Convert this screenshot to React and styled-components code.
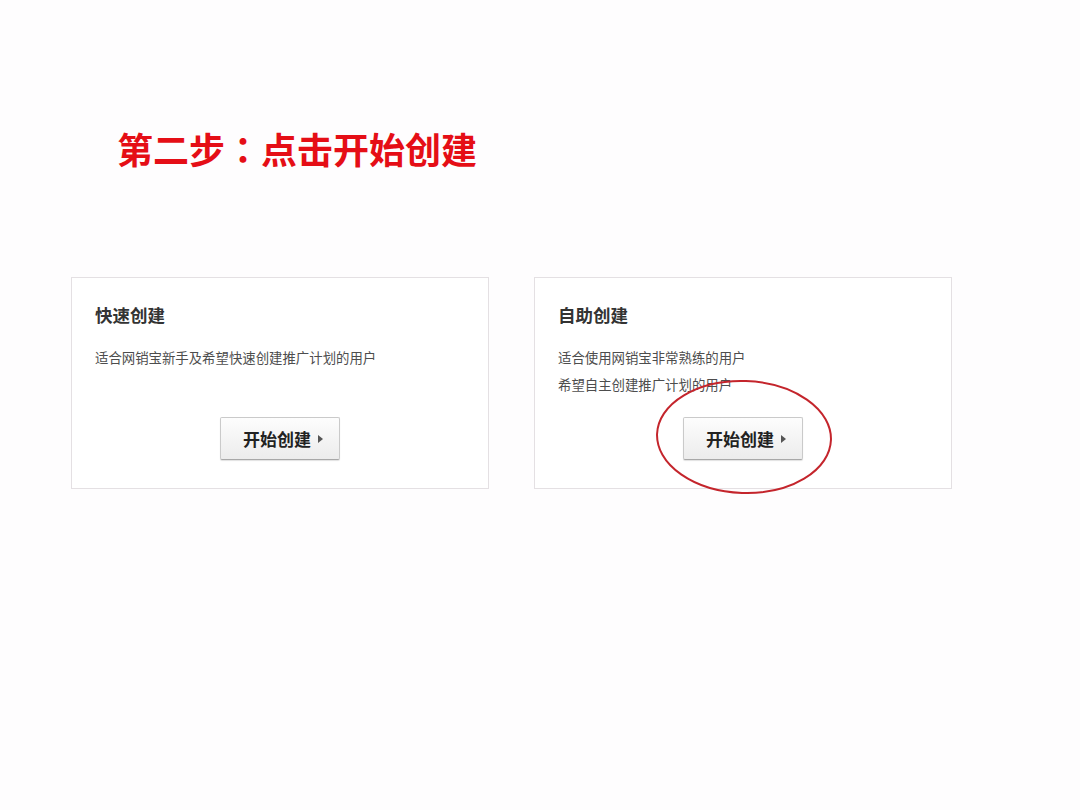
import React from "react";
import styled, { createGlobalStyle } from "styled-components";

const GlobalStyle = createGlobalStyle`
  html, body { margin: 0; padding: 0; background: #ffffff; }
  body { font-family: "Noto Sans CJK SC", "Noto Sans", sans-serif; }
`;

const Page = styled.div`
  width: 1080px;
  height: 810px;
  background: #fefdfe;
  box-sizing: border-box;
  padding-top: 126px;
  overflow: hidden;
`;

const Heading = styled.h1`
  margin: 0 0 107px 117px;
  font-size: 36px;
  line-height: 44px;
  font-weight: 700;
  color: #e50e16;
  letter-spacing: 0;
`;

const Colon = styled.span`
  font-family: "Noto Sans CJK TC", "Noto Sans CJK SC", sans-serif;
`;

const CardRow = styled.div`
  display: flex;
  gap: 45px;
  padding-left: 71px;
`;

const Card = styled.div`
  position: relative;
  width: 418px;
  height: 212px;
  box-sizing: border-box;
  border: 1px solid #e4e0e3;
  background: #ffffff;
  display: flex;
  flex-direction: column;
  padding: 25px 20px 28px 23px;
`;

const CardTitle = styled.div`
  font-size: 17.5px;
  line-height: 24px;
  font-weight: 700;
  color: #333333;
`;

const Desc = styled.div`
  margin-top: 17px;
  font-size: 13.4px;
  line-height: 27px;
  color: #4d4d4d;
`;

const ButtonWrap = styled.div`
  margin-top: auto;
  display: flex;
  justify-content: center;
  padding-right: 3px;
`;

const StartButton = styled.button`
  width: 120px;
  height: 43px;
  box-sizing: border-box;
  display: flex;
  align-items: center;
  gap: 7px;
  padding: 0 0 0 22px;
  border: 1px solid #cacaca;
  border-bottom-color: #a8a8a8;
  border-radius: 2px;
  background: linear-gradient(#fdfdfd, #ececec);
  box-shadow: 0 1px 1px rgba(0, 0, 0, 0.12);
  font-family: "Noto Sans CJK SC", sans-serif;
  font-size: 17px;
  font-weight: 700;
  color: #222222;
  cursor: pointer;
`;

const Arrow = styled.span`
  width: 0;
  height: 0;
  border-top: 4px solid transparent;
  border-bottom: 4px solid transparent;
  border-left: 5px solid #555555;
`;

const Highlight = styled.svg`
  position: absolute;
  left: 120px;
  top: 101px;
  width: 178px;
  height: 116px;
  overflow: visible;
  pointer-events: none;
`;

function CreateCard({ title, lines, highlighted }) {
  return (
    <Card>
      <CardTitle>{title}</CardTitle>
      <Desc>
        {lines.map((l) => (
          <div key={l}>{l}</div>
        ))}
      </Desc>
      <ButtonWrap>
        <StartButton>
          开始创建
          <Arrow />
        </StartButton>
      </ButtonWrap>
      {highlighted && (
        <Highlight viewBox="0 0 178 116">
          <ellipse
            cx="89"
            cy="58"
            rx="87"
            ry="56"
            fill="none"
            stroke="#c4252c"
            strokeWidth="2"
            transform="rotate(2 89 58)"
          />
        </Highlight>
      )}
    </Card>
  );
}

export default function App() {
  return (
    <>
      <GlobalStyle />
      <Page>
        <Heading>
          第二步<Colon>：</Colon>点击开始创建
        </Heading>
        <CardRow>
          <CreateCard
            title="快速创建"
            lines={["适合网销宝新手及希望快速创建推广计划的用户"]}
          />
          <CreateCard
            title="自助创建"
            lines={["适合使用网销宝非常熟练的用户", "希望自主创建推广计划的用户"]}
            highlighted
          />
        </CardRow>
      </Page>
    </>
  );
}
